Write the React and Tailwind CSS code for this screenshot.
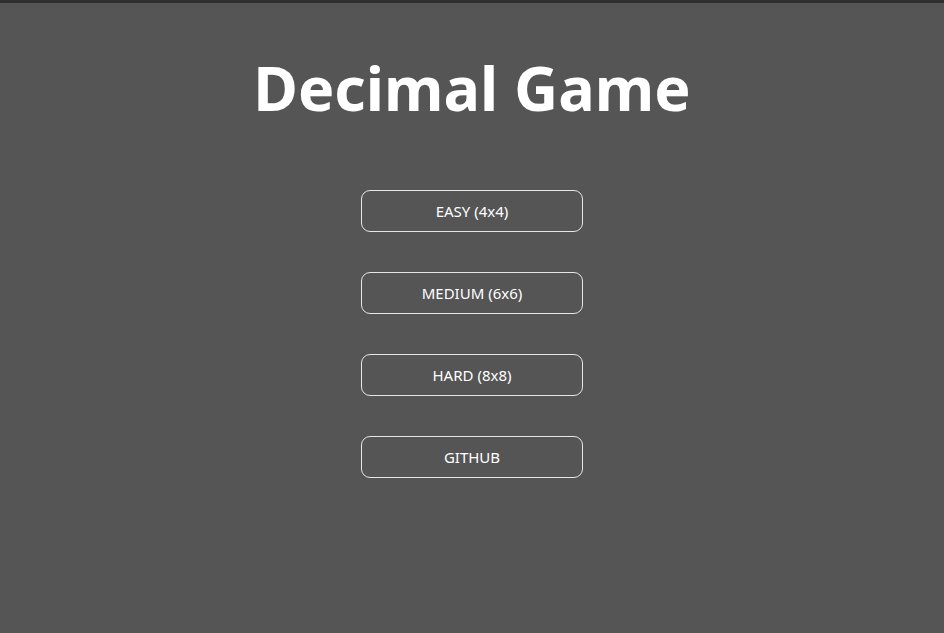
export default function App() {
  const modes = ['EASY (4x4)', 'MEDIUM (6x6)', 'HARD (8x8)', 'GITHUB']

  return (
    <div
      className="flex h-[633px] flex-col items-center border-t-[3px] border-t-[#2f2f2f] bg-[#555555] text-white"
      style={{ fontFamily: '"Noto Sans", "Open Sans", sans-serif' }}
    >
      <h1 className="mt-[43px] h-[84px] text-[61px] leading-[84px] font-bold">Decimal Game</h1>
      <div className="mt-[60px] flex flex-col gap-[40px]">
        {modes.map((m) => (
          <button
            key={m}
            type="button"
            className="h-[42px] w-[222px] rounded-[9px] border border-[#e6e6e6] text-[15px] text-white"
          >
            {m}
          </button>
        ))}
      </div>
    </div>
  )
}
